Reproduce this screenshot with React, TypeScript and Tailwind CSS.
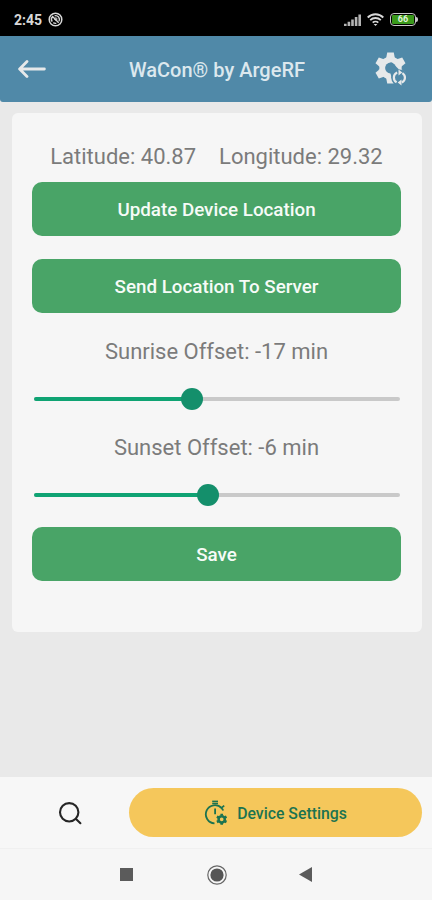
import React from 'react';

interface OffsetSliderProps {
  label: string;
  percent: number;
}

const StatusBar = () => (
  <div className="h-9 shrink-0 bg-black text-[#d8d8d8] flex items-center justify-between pl-[14px] pr-[14px] pt-[3px]">
    <div className="flex items-center gap-[6px]">
      <span className="text-[14px] leading-none font-bold">2:45</span>
      <svg className="w-[15px] h-[15px]" viewBox="0 0 15 15" fill="none" stroke="currentColor">
        <circle cx="7.5" cy="7.5" r="6.3" strokeWidth="1.5" />
        <path d="M4.2 9.6a4 4 0 0 1 .4-5.1l6.1 6.2M6.6 3.8a3.8 3.8 0 0 1 4.4 5.4M5.3 10.7a4 4 0 0 0 3 .6" strokeWidth="1.4" />
        <circle cx="7.8" cy="7" r="1.2" strokeWidth="1" />
      </svg>
    </div>
    <div className="flex items-center gap-[6px]">
      <svg className="w-[17px] h-[12px]" viewBox="0 0 17 13" preserveAspectRatio="none" fill="#b4b4b4">
        <path d="M0 10.5h2.6V13H0zM3.6 8.5h2.6V13H3.6zM7.2 6h2.6v7H7.2zM10.8 3.3h2.6V13h-2.6zM14.4.5H17V13h-2.6z" />
      </svg>
      <svg className="w-[17px] h-[13px]" viewBox="0 0 17 13" fill="none" stroke="currentColor" strokeWidth="1.8">
        <path d="M.7 4.5a11 11 0 0 1 15.6 0M3.2 7.2a7.5 7.5 0 0 1 10.6 0M5.7 9.7a4 4 0 0 1 5.6 0" />
        <path d="M8.5 13 6.6 10.9h3.8z" fill="currentColor" stroke="none" />
      </svg>
      <div className="flex items-center">
        <div className="w-[26px] h-[13px] rounded-[4px] border-[1.5px] border-[#c9c9c9] p-px">
          <div className="w-full h-full rounded-[1px] bg-[#3a991b] flex items-center justify-center text-[9px] leading-none font-bold text-[#e3f3de]">
            66
          </div>
        </div>
        <div className="w-[2px] h-[5px] rounded-r-sm bg-[#c9c9c9]" />
      </div>
    </div>
  </div>
);

const GearSyncIcon = () => (
  <svg className="w-[34px] h-[36px]" viewBox="0 0 34 36" fill="none">
    <mask id="gear-cut">
      <rect width="34" height="36" fill="white" />
      <circle cx="16.5" cy="17" r="5.4" fill="black" />
      <circle cx="25.4" cy="26.6" r="8.2" fill="black" />
      <path d="M16.5 11.6h1.5l8 8-8 9-1.5-6z" fill="black" />
    </mask>
    <g mask="url(#gear-cut)" fill="#e6e9ea">
      <circle cx="16.5" cy="17" r="11.2" />
      <path d="M13.2 1.6h6.6l1 5.5v20l-1 5.3h-6.6l-1-5.3v-20z" />
      <path transform="rotate(60 16.5 17)" d="M13.2 1.6h6.6l1 5.5v20l-1 5.3h-6.6l-1-5.3v-20z" />
      <path transform="rotate(120 16.5 17)" d="M13.2 1.6h6.6l1 5.5v20l-1 5.3h-6.6l-1-5.3v-20z" />
    </g>
    <g stroke="#e6e9ea" strokeWidth="2.2">
      <path d="M22.6 31.3a5.4 5.4 0 0 1 .6-9.7M28.4 22.1a5.4 5.4 0 0 1-.6 9.5" />
    </g>
    <path d="M24 18.8v6l3.8-3zM27 28.6v6l-3.8-3z" transform="translate(.5 -.2)" fill="#e6e9ea" />
  </svg>
);

const TimerGearIcon = () => (
  <svg className="w-[24px] h-[26px]" viewBox="0 0 24 26" fill="none" stroke="#1c7350" strokeWidth="1.8">
    <path d="M8.2 1.5h5.8" />
    <path d="M8.2 3.6h5.8" strokeWidth="1.2" />
    <path d="M11.1 8.6v5.6" />
    <path d="M17.8 7.6 20.2 5.6M17.6 8.1A9.1 9.1 0 1 0 10.5 23.4M17.6 8.1a9 9 0 0 1 1.6 2.4" />
    <circle cx="17.7" cy="19.3" r="3.1" strokeWidth="2.5" />
    <path
      d="M17.7 13.8v1.8M17.7 23v1.8M12.9 16.6l1.8.9M20.7 21.1l1.8.9M12.9 22l1.8-.9M20.7 17.5l1.8-.9"
      strokeWidth="2.6"
    />
  </svg>
);

const ActionButton: React.FC<{ children: React.ReactNode }> = ({ children }) => (
  <button className="w-full h-[54px] rounded-[10px] bg-[#49a467] text-[#f6fbf7] text-[18.8px] font-medium flex items-center justify-center pt-[3px]">
    {children}
  </button>
);

const OffsetSlider: React.FC<OffsetSliderProps> = ({ label, percent }) => (
  <div className="w-full">
    <p className="h-[26px] leading-[26px] text-[22px] text-center">{label}</p>
    <div className="relative mt-[23px] ml-[2px] mr-px h-[22px] flex items-center">
      <div className="w-full h-1 rounded-[2px] bg-[#c9c9c9] overflow-hidden">
        <div className="h-full bg-[#0fa373]" style={{ width: `${percent}%` }} />
      </div>
      <div
        className="absolute top-0 w-[22px] h-[22px] -translate-x-1/2 rounded-full bg-[#148f6b]"
        style={{ left: `${percent}%` }}
      />
    </div>
  </div>
);

export default function App() {
  return (
    <div className="w-[432px] h-[900px] overflow-hidden flex flex-col bg-[#e9e9e9] font-['Roboto',sans-serif]">
      <StatusBar />

      {/* Header */}
      <header className="h-[66px] shrink-0 bg-[#5089a8] rounded-b-[3px] flex items-center justify-between pl-[18px] pr-[24px]">
        <svg className="w-7 h-[18px]" viewBox="0 0 28 18" fill="none" stroke="#e6e9ea" strokeWidth="2.8" strokeLinecap="round" strokeLinejoin="round">
          <path d="M9 1.6 1.6 9 9 16.4M2 9h24.4" />
        </svg>
        <h1 className="text-[20px] font-medium text-[#dce8ee] pl-[14px] pt-px">WaCon® by ArgeRF</h1>
        <GearSyncIcon />
      </header>

      {/* Location card */}
      <main className="flex-1 pt-[11px] pl-3 pr-[10px]">
        <div className="h-[519px] rounded-[6px] bg-[#f6f6f6] pl-5 pr-[21px] pt-[31px] text-[#7b7b7b]">
          <div className="h-[26px] leading-[26px] text-[22px] flex justify-center gap-[23px] mb-3">
            <span>Latitude: 40.87</span>
            <span>Longitude: 29.32</span>
          </div>
          <ActionButton>Update Device Location</ActionButton>
          <div className="h-[23px]" />
          <ActionButton>Send Location To Server</ActionButton>
          <div className="mt-[26px] mb-[21px] flex flex-col gap-[25px]">
            <OffsetSlider label="Sunrise Offset: -17 min" percent={43.3} />
            <OffsetSlider label="Sunset Offset: -6 min" percent={47.6} />
          </div>
          <ActionButton>Save</ActionButton>
        </div>
      </main>

      {/* Bottom tabs */}
      <nav className="h-[71px] shrink-0 bg-[#f7f7f7] flex items-center pl-[58px] pr-[10px]">
        <svg className="w-6 h-6 mr-[47px]" viewBox="0 0 24 24" fill="none" stroke="#252525" strokeWidth="2.1" strokeLinecap="round">
          <circle cx="11.2" cy="11.3" r="9.2" />
          <path d="m18 18 4.4 4.2" />
        </svg>
        <button className="flex-1 h-[49px] rounded-full bg-[#f5c75b] flex items-center justify-center gap-[9px] text-[#1c7350] text-[15.8px] font-medium">
          <TimerGearIcon />
          <span className="pt-[3px]">Device Settings</span>
        </button>
      </nav>

      {/* System navigation */}
      <div className="h-[52px] shrink-0 bg-[#f6f6f6] border-t border-[#f0f0f0] flex items-center pl-[120px]">
        <div className="w-[13px] h-[13px] bg-[#5b5b5b]" />
        <svg className="w-5 h-5 ml-[74px]" viewBox="0 0 20 20">
          <circle cx="10" cy="10" r="9.2" fill="none" stroke="#666" strokeWidth="1.2" />
          <circle cx="10" cy="10" r="6.6" fill="#555" />
        </svg>
        <svg className="w-[13px] h-[15px] ml-[72px]" viewBox="0 0 13 15" fill="#5b5b5b">
          <path d="M0 7.5 13 0v15z" />
        </svg>
      </div>
    </div>
  );
}
